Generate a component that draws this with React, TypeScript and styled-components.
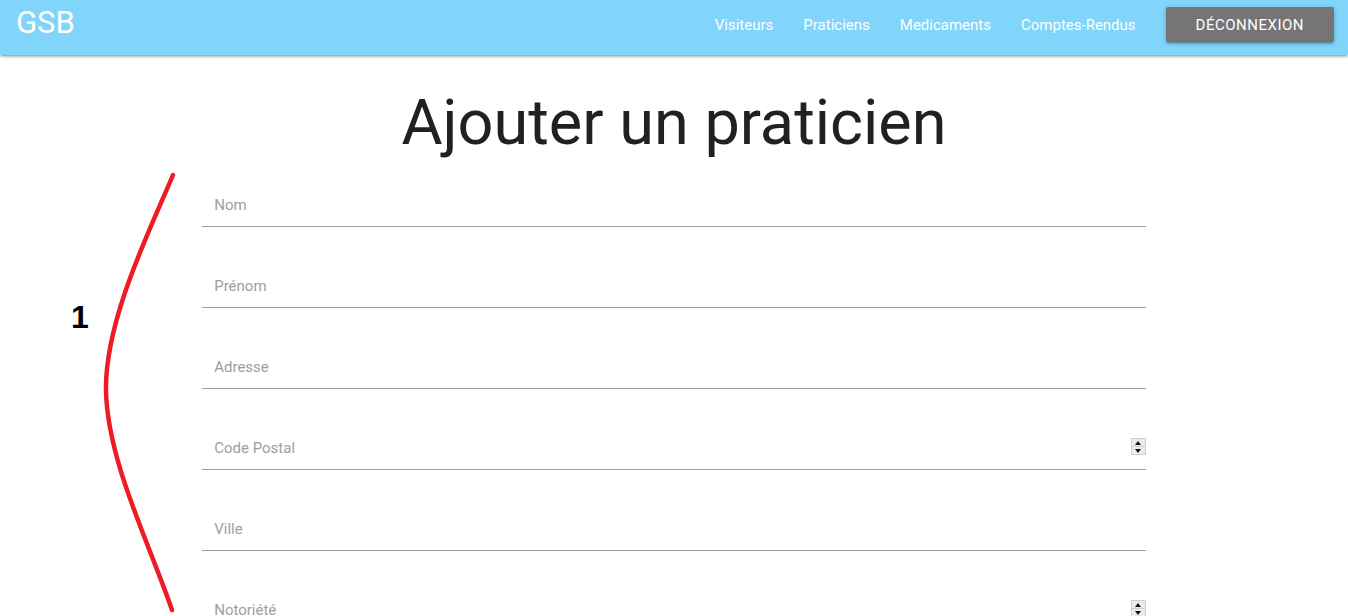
import styled, { createGlobalStyle } from 'styled-components';

const GlobalStyle = createGlobalStyle`
	html, body {
		margin: 0;
		padding: 0;
		background: #fff;
		font-family: Roboto, "Liberation Sans", sans-serif;
	}
	* { box-sizing: border-box; }
`;

const Page = styled.div`
	position: relative;
	width: 100%;
	min-height: 616px;
	overflow: hidden;
`;

const Nav = styled.nav`
	display: flex;
	align-items: flex-start;
	height: 55px;
	padding: 7px 14px 0 16px;
	background-color: #81d4fa;
	box-shadow: 0 2px 2px 0 rgba(0,0,0,0.14), 0 3px 1px -2px rgba(0,0,0,0.12), 0 1px 5px 0 rgba(0,0,0,0.2);
	color: #fff;
`;

const Brand = styled.a`
	font-size: 31px;
	line-height: 32px;
	color: #fff;
`;

const Menu = styled.ul`
	display: flex;
	align-items: center;
	list-style: none;
	margin: 0 0 0 auto;
	padding: 0;
	li a {
		display: block;
		padding: 0 15px;
		font-size: 15px;
		line-height: 32px;
		color: #fff;
		text-decoration: none;
	}
`;

const LogoutButton = styled.button`
	height: 35px;
	margin-left: 15px;
	padding: 0 30px;
	border: none;
	border-radius: 2px;
	background-color: #757575;
	color: #fff;
	font-family: Roboto, sans-serif;
	font-size: 15px;
	letter-spacing: .5px;
	text-transform: uppercase;
	box-shadow: 0 2px 2px 0 rgba(0,0,0,0.14), 0 3px 1px -2px rgba(0,0,0,0.12), 0 1px 5px 0 rgba(0,0,0,0.2);
`;

const Title = styled.h1`
	margin: 33px 0 0;
	text-align: center;
	font-size: 63px;
	font-weight: 400;
	line-height: 70px;
	color: #212121;
`;

const Form = styled.form`
	display: flex;
	flex-direction: column;
	gap: 35px;
	width: 70%;
	margin: 0 auto;
	padding-top: 23px;
`;

const Field = styled.div`
	position: relative;
	display: flex;
	align-items: center;
	height: 46px;
	border-bottom: 1px solid #9e9e9e;
	padding: 2px 0 0 12px;
`;

const Label = styled.label`
	font-size: 15px;
	color: #9e9e9e;
`;

const Spinner = styled.span`
	position: absolute;
	right: 0;
	top: 14px;
	display: flex;
	flex-direction: column;
	width: 15px;
	height: 17px;
	border: 1px solid #cfcfcf;
	background: #ececec;
`;

const Arrow = styled.span<{ $down?: boolean }>`
	flex: 1;
	display: flex;
	align-items: center;
	justify-content: center;
	& + & { border-top: 1px solid #cfcfcf; }
	&::after {
		content: '';
		width: 0;
		height: 0;
		border-left: 3.5px solid transparent;
		border-right: 3.5px solid transparent;
		${(p) => (p.$down ? 'border-top: 4px solid #111;' : 'border-bottom: 4px solid #111;')}
	}
`;

const Annotation = styled.svg`
	position: absolute;
	left: 0;
	top: 0;
	pointer-events: none;
`;

const Number = styled.div`
	position: absolute;
	left: 71px;
	top: 299px;
	font-family: "Liberation Sans", sans-serif;
	font-weight: 700;
	font-size: 32px;
	color: #000;
`;

const fields = [
	{ label: 'Nom' },
	{ label: 'Prénom' },
	{ label: 'Adresse' },
	{ label: 'Code Postal', number: true },
	{ label: 'Ville' },
	{ label: 'Notoriété', number: true },
];

export default function App() {
	return (
		<Page>
			<GlobalStyle />
			<Nav>
				<Brand>GSB</Brand>
				<Menu>
					<li><a href="#">Visiteurs</a></li>
					<li><a href="#">Praticiens</a></li>
					<li><a href="#">Medicaments</a></li>
					<li><a href="#">Comptes-Rendus</a></li>
					<li><LogoutButton>Déconnexion</LogoutButton></li>
				</Menu>
			</Nav>

			<Title>Ajouter un praticien</Title>

			<Form>
				{fields.map((f) => (
					<Field key={f.label}>
						<Label>{f.label}</Label>
						{f.number && (
							<Spinner>
								<Arrow />
								<Arrow $down />
							</Spinner>
						)}
					</Field>
				))}
			</Form>

			<Annotation width="300" height="616" viewBox="0 0 300 616">
				<path d="M173,175 C150,230 105,320 106,390 C107,460 150,545 172,610" fill="none" stroke="#ed1c24" strokeWidth="4.5" strokeLinecap="round" />
			</Annotation>
			<Number>1</Number>
		</Page>
	);
}
